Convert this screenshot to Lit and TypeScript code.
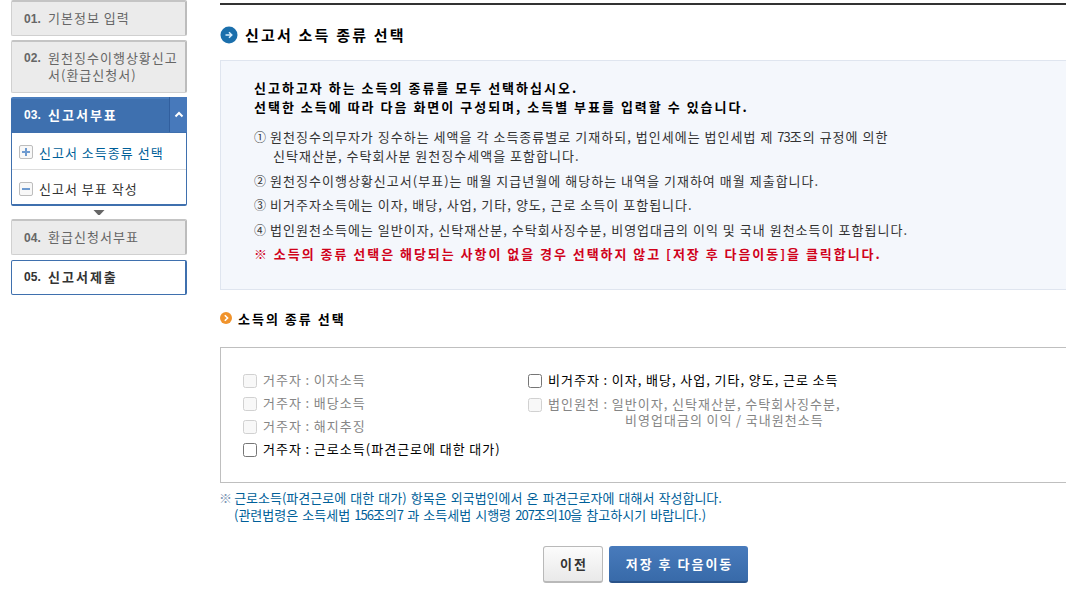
import { LitElement, html, css, svg } from 'lit';
import { customElement } from 'lit/decorators.js';

const textStyles = css`
  :host {
    display: block;
    box-sizing: border-box;
    font-family: 'Noto Sans CJK KR', sans-serif;
    font-size: 13px;
    letter-spacing: 1.02px;
    word-spacing: 0;
    white-space: nowrap;
  }

  * {
    box-sizing: border-box;
  }

  .digits {
    letter-spacing: -1px;
  }
`;

@customElement('step-menu')
class StepMenu extends LitElement {
  static styles = [
    textStyles,
    css`
      :host {
        width: 176px;
        color: #666;
      }

      .step {
        display: flex;
        padding: 0 0 0 12px;
        border: 1px solid #d0d0d0;
        border-top: 2px solid #c4c4c4;
        border-right: 2px solid #bcbcbc;
        border-radius: 2px;
        background: #ebebeb;
        height: 36px;
        line-height: 32px;
        margin-bottom: 4px;
      }

      .step.tall {
        height: 53px;
        padding-top: 7px;
        line-height: 17px;
      }

      .step.current {
        height: 35px;
        line-height: 31px;
        padding-left: 13px;
        margin: 0;
        border: 0;
        border-top: 2px solid #4a7dbd;
        border-radius: 2px 2px 0 0;
        background: #3e70af;
        color: #fff;
      }

      .step.waiting {
        margin-bottom: 5px;
      }

      .step.open {
        height: 35px;
        line-height: 31px;
        border: 1px solid #3f70ae;
        border-right-width: 2px;
        background: #fff;
        color: #333;
        margin: 0;
      }

      .number {
        font: bold 12px 'Liberation Sans', sans-serif;
        line-height: inherit;
        letter-spacing: 0.1px;
        width: 24px;
        padding-top: 1px;
        flex: none;
      }

      .strong {
        font-weight: bold;
        letter-spacing: 2px;
      }

      .fold {
        display: flex;
        align-items: center;
        justify-content: center;
        width: 18px;
        margin: -2px 0 0 auto;
        border-left: 1px solid #315f9e;
        background: #4779bb;
      }

      .sub {
        border: 1px solid #3f70ae;
        border-bottom-width: 2px;
        border-radius: 0 0 2px 2px;
        height: 74px;
      }

      .sub-item {
        display: flex;
        align-items: center;
        gap: 6px;
        height: 36px;
        padding-left: 7px;
        padding-top: 2px;
        color: #333;
      }

      .sub-item + .sub-item {
        border-top: 1px solid #ddd;
      }

      .sub-item.active {
        color: #005f99;
      }

      .down {
        display: block;
        margin: 4px auto;
      }
    `,
  ];

  sign(open: boolean) {
    return html`
      <svg width="14" height="14" viewBox="0 0 14 14">
        <rect x="0.5" y="0.5" width="13" height="13" rx="1.5" fill="#f8f8f8" stroke="#bdbdbd" />
        <path d="M3 7h8" stroke="#6f9bd0" stroke-width="2" />
        ${open ? svg`<path d="M7 3v8" stroke="#6f9bd0" stroke-width="2" />` : ''}
      </svg>
    `;
  }

  render() {
    return html`
      <div class="step"><span class="number">01.</span><span>기본정보 입력</span></div>
      <div class="step tall">
        <span class="number">02.</span><span>원천징수이행상황신고<br />서(환급신청서)</span>
      </div>
      <div class="step current">
        <span class="number">03.</span><span class="strong">신고서부표</span>
        <span class="fold">
          <svg width="10" height="7" viewBox="0 0 10 7">
            <path d="M1.5 5.5L5 2l3.500 3.500" fill="none" stroke="#fff" stroke-width="2" />
          </svg>
        </span>
      </div>
      <div class="sub">
        <div class="sub-item active">${this.sign(true)}<span>신고서 소득종류 선택</span></div>
        <div class="sub-item">${this.sign(false)}<span>신고서 부표 작성</span></div>
      </div>
      <svg class="down" width="12" height="5" viewBox="0 0 12 5">
        <path d="M0.500 0h11L6.800 5H5.200z" fill="#666" />
      </svg>
      <div class="step waiting"><span class="number">04.</span><span>환급신청서부표</span></div>
      <div class="step open"><span class="number">05.</span><span class="strong">신고서제출</span></div>
    `;
  }
}

@customElement('guide-box')
class GuideBox extends LitElement {
  static styles = [
    textStyles,
    css`
      :host {
        height: 230px;
        padding: 17px 0 0 33px;
        border: 1px solid #dfe5ef;
        border-right: 0;
        background: #f4f7fc;
        color: #333;
        line-height: 19px;
      }

      p {
        margin: 0;
      }

      .lead,
      .warning {
        font-weight: bold;
        letter-spacing: 2px;
      }

      .lead {
        color: #000;
        margin-bottom: 11px;
      }

      .item {
        display: flex;
        gap: 3px;
        margin-bottom: 5.500px;
      }

      .mark {
        width: 13px;
        font-size: 12px;
        letter-spacing: 0;
      }

      .next {
        padding-left: 3px;
      }

      .warning {
        color: #d0021b;
        letter-spacing: 1.960px;
      }
    `,
  ];

  items = [
    html`원천징수의무자가 징수하는 세액을 각 소득종류별로 기재하되, 법인세에는 법인세법 제 <span class="digits">73</span>조의 규정에 의한<br /><span class="next">신탁재산분, 수탁회사분 원천징수세액을 포함합니다.</span>`,
    '원천징수이행상황신고서(부표)는 매월 지급년월에 해당하는 내역을 기재하여 매월 제출합니다.',
    '비거주자소득에는 이자, 배당, 사업, 기타, 양도, 근로 소득이 포함됩니다.',
    '법인원천소득에는 일반이자, 신탁재산분, 수탁회사징수분, 비영업대금의 이익 및 국내 원천소득이 포함됩니다.',
  ];

  render() {
    return html`
      <p class="lead">
        신고하고자 하는 소득의 종류를 모두 선택하십시오.<br />선택한 소득에 따라 다음 화면이 구성되며, 소득별 부표를 입력할 수 있습니다.
      </p>
      ${this.items.map(
        (item, i) => html`<div class="item"><span class="mark">${'①②③④'[i]}</span><span>${item}</span></div>`
      )}
      <p class="warning">※ 소득의 종류 선택은 해당되는 사항이 없을 경우 선택하지 않고 [저장 후 다음이동]을 클릭합니다.</p>
    `;
  }
}

@customElement('income-form')
class IncomeForm extends LitElement {
  static styles = [
    textStyles,
    css`
      :host {
        display: flex;
        height: 136px;
        padding: 22px 0 0 22px;
        border: 1px solid #bfbfbf;
        border-right: 0;
        color: #000;
        word-spacing: -0.300px;
      }

      .column {
        width: 285px;
      }

      label {
        display: flex;
        gap: 6px;
        height: 23px;
        line-height: 19px;
      }

      .disabled {
        color: #858585;
      }

      input {
        appearance: none;
        flex: none;
        width: 14px;
        height: 14px;
        margin: 4px 0 0;
        border: 1px solid #767676;
        border-radius: 2.500px;
        background: #fff;
      }

      input:disabled {
        border-color: #d1d1d1;
        background: #f8f8f8;
      }

      .wrapped {
        line-height: 16px;
        padding-top: 3px;
        height: 40px;
      }

      .wrapped input {
        margin-top: 2px;
      }

      .next {
        padding-left: 77px;
      }
    `,
  ];

  option(text: unknown, disabled = true, extra = '') {
    return html`
      <label class="${disabled ? 'disabled' : ''} ${extra}">
        <input type="checkbox" ?disabled=${disabled} /><span>${text}</span>
      </label>
    `;
  }

  render() {
    return html`
      <div class="column">
        ${this.option('거주자 : 이자소득')} ${this.option('거주자 : 배당소득')}
        ${this.option('거주자 : 해지추징')} ${this.option('거주자 : 근로소득(파견근로에 대한 대가)', false)}
      </div>
      <div class="column">
        ${this.option('비거주자 : 이자, 배당, 사업, 기타, 양도, 근로 소득', false)}
        ${this.option(
          html`법인원천 : 일반이자, 신탁재산분, 수탁회사징수분,<br /><span class="next">비영업대금의 이익 / 국내원천소득</span>`,
          true,
          'wrapped'
        )}
      </div>
    `;
  }
}

@customElement('app-root')
class AppRoot extends LitElement {
  static styles = [
    textStyles,
    css`
      :host {
        display: flex;
        gap: 33px;
        width: 1066px;
        height: 594px;
        padding-left: 11px;
        overflow: hidden;
        background: #fff;
        color: #000;
      }

      main {
        flex: 1;
        min-width: 0;
        margin-top: 3px;
        border-top: 2px solid #333;
      }

      h1,
      h2 {
        display: flex;
        align-items: center;
        margin: 0;
        letter-spacing: 2px;
      }

      h1 {
        height: 55px;
        gap: 7px;
        padding-top: 4px;
        font-size: 15px;
        letter-spacing: 2.200px;
      }

      h2 {
        height: 57px;
        gap: 6px;
        font-size: 13px;
        padding-bottom: 1px;
      }

      .notes {
        margin: 7px 0 0;
        color: #005f99;
        line-height: 16.500px;
        letter-spacing: 0;
        word-spacing: 1.200px;
      }

      .star {
        margin: 0 -2px 0 -1px;
        color: #8097b5;
      }

      .next {
        padding-left: 14px;
      }

      .buttons {
        display: flex;
        justify-content: center;
        gap: 6px;
        margin-top: 23px;
        width: 851px;
      }

      button {
        height: 37px;
        width: 60px;
        padding: 0 0 1px 2px;
        border: 1px solid #b9b9b9;
        border-bottom-width: 2px;
        border-radius: 3px;
        background: linear-gradient(#fcfcfc, #e9e9e9);
        color: #333;
        font: bold 13px 'Noto Sans CJK KR', sans-serif;
        letter-spacing: 2px;
      }

      button.save {
        width: 139px;
        border: 0;
        border-bottom: 2px solid #2a5389;
        background: linear-gradient(#487bbc, #386aa9);
        color: #fff;
      }
    `,
  ];

  render() {
    return html`
      <step-menu></step-menu>
      <main>
        <h1>
          <svg width="18" height="18" viewBox="0 0 18 18">
            <circle cx="9" cy="9" r="8.500" fill="#1b6fac" />
            <path d="M5.500 9h6M9 6.200L11.800 9 9 11.800" fill="none" stroke="#d9efff" stroke-width="1.500" />
          </svg>
          신고서 소득 종류 선택
        </h1>
        <guide-box></guide-box>
        <h2>
          <svg width="12" height="12" viewBox="0 0 12 12">
            <circle cx="6" cy="6" r="6" fill="#f0932c" />
            <path d="M4.800 3.200L7.600 6 4.800 8.800" fill="none" stroke="#fff" stroke-width="1.600" />
          </svg>
          소득의 종류 선택
        </h2>
        <income-form></income-form>
        <p class="notes">
          <span class="star">※</span> 근로소득(파견근로에 대한 대가) 항목은 외국법인에서 온 파견근로자에 대해서 작성합니다.<br />
          <span class="next">(관련법령은 소득세법 <span class="digits">156</span>조의<span class="digits">7</span> 과 소득세법 시행령 <span class="digits">207</span>조의<span class="digits">10</span>을 참고하시기 바랍니다.)</span>
        </p>
        <div class="buttons">
          <button>이전</button>
          <button class="save">저장 후 다음이동</button>
        </div>
      </main>
    `;
  }
}
